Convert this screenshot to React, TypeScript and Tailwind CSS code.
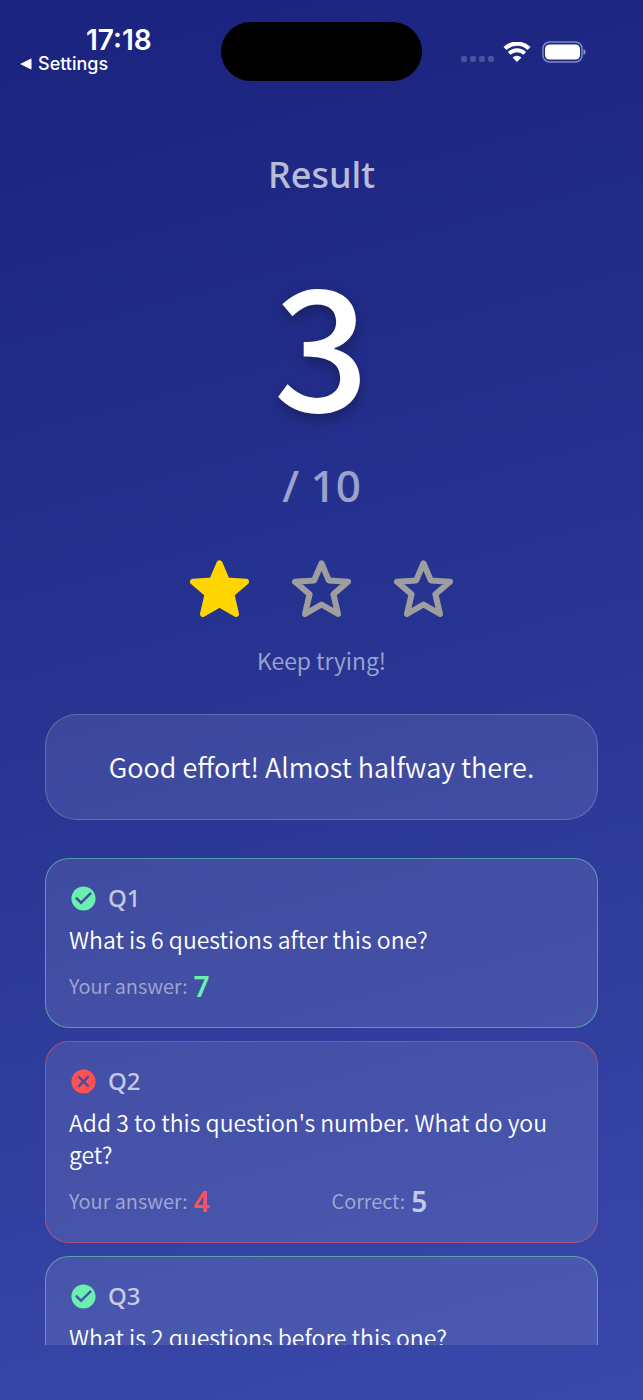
import { MdCancel, MdCheckCircle } from "react-icons/md";
import clsx from "clsx";

type Answer = {
  id: number;
  question: string;
  given: string;
  expected: string;
};

const TOTAL = 10;
const SCORE = 3;

const answers: Answer[] = [
  {
    id: 1,
    question: "What is 6 questions after this one?",
    given: "7",
    expected: "7",
  },
  {
    id: 2,
    question: "Add 3 to this question's number. What do you get?",
    given: "4",
    expected: "5",
  },
  {
    id: 3,
    question: "What is 2 questions before this one?",
    given: "1",
    expected: "1",
  },
];

function StatusBar() {
  return (
    <div className="flex h-[104px] items-start justify-between pt-[22px] font-['Inter',sans-serif] text-white">
      <div className="w-[201px] pl-5">
        <div className="pl-[66px] text-[28px] leading-9 font-semibold">
          17:18
        </div>
        <a
          href="#settings"
          className="flex items-center gap-[6px] text-lg leading-[10px] font-medium"
        >
          <svg viewBox="0 0 12 12" className="size-3" fill="currentColor">
            <path d="M11.5 1.2v9.6c0 .5-.4.7-.8.5L1 6.6c-.6-.3-.6-.9 0-1.2L10.7.7c.4-.2.8 0 .8.5z" />
          </svg>
          Settings
        </a>
      </div>
      <div className="h-[59px] w-[201px] rounded-full bg-black" />
      <div className="flex h-[59px] w-[201px] items-center pl-[19px]">
        <div className="mt-[15px] flex gap-[3px]">
          {[0, 1, 2, 3].map((dot) => (
            <span key={dot} className="size-[6px] rounded-[2px] bg-white/20" />
          ))}
        </div>
        <svg viewBox="0 0 28 20" className="ml-[9px] h-5 w-7" fill="none">
          <path
            d="M2 6.6a17 17 0 0 1 24 0"
            stroke="white"
            strokeWidth="4.2"
          />
          <path
            d="M6.2 11.4a11.2 11.2 0 0 1 15.6 0"
            stroke="white"
            strokeWidth="3.8"
          />
          <path d="M14 20l-4.4-4.5a6.3 6.3 0 0 1 8.8 0z" fill="white" />
        </svg>
        <svg viewBox="0 0 44 22" className="ml-[11px] h-[22px] w-11">
          <rect
            x="1"
            y="1"
            width="39"
            height="20"
            rx="6.5"
            fill="none"
            stroke="white"
            strokeOpacity=".45"
            strokeWidth="1.5"
          />
          <rect x="3" y="3.5" width="35" height="15" rx="4.5" fill="white" />
          <path
            d="M41.5 8c1.3.4 2 1.7 2 3s-.7 2.6-2 3z"
            fill="white"
            fillOpacity=".5"
          />
        </svg>
      </div>
    </div>
  );
}

function Star({ filled }: { filled: boolean }) {
  return (
    <svg
      viewBox="0 0 60 60"
      className={clsx(
        "size-[60px]",
        filled ? "text-[#ffd600]" : "text-[#9e9e9e]"
      )}
      fill={filled ? "currentColor" : "none"}
      stroke="currentColor"
      strokeWidth="6"
      strokeLinejoin="round"
    >
      <path d="M29.5 4.3L36.8 21.4L56 22.8L41.4 35.3L46 55L29.5 45.5L13 55L17.6 35.3L3 22.8L22.2 21.4Z" />
    </svg>
  );
}

function AnswerCard({ answer }: { answer: Answer }) {
  const correct = answer.given === answer.expected;

  return (
    <li
      className={clsx(
        "shrink-0 rounded-3xl border bg-white/10 px-[23px] pt-6 pb-[23px]",
        correct ? "border-[#69f0ae]/50" : "border-[#ff5252]/50"
      )}
    >
      <div className="flex h-[30px] items-center gap-[10px]">
        {correct ? (
          <MdCheckCircle className="size-[29px] text-[#69f0ae]" />
        ) : (
          <MdCancel className="size-[29px] text-[#ff5252]" />
        )}
        <h2 className="font-['Noto_Sans',sans-serif] text-2xl font-medium text-white/70">
          Q{answer.id}
        </h2>
      </div>
      <p className="mt-[10px] text-[23px] leading-8 text-white">
        {answer.question}
      </p>
      <div className="mt-[13px] grid h-9 grid-cols-2 gap-5 text-xl text-white/50">
        <p className="flex items-center gap-[6px]">
          Your answer:
          <span
            className={clsx(
              "font-['Noto_Sans',sans-serif] text-[28px] leading-9 font-semibold",
              correct ? "text-[#69f0ae]" : "text-[#ff5252]"
            )}
          >
            {answer.given}
          </span>
        </p>
        {!correct && (
          <p className="flex items-center gap-[6px]">
            Correct:
            <span className="font-['Noto_Sans',sans-serif] text-[28px] leading-9 font-semibold text-white/70">
              {answer.expected}
            </span>
          </p>
        )}
      </div>
    </li>
  );
}

export default function App() {
  const stars = Math.ceil(SCORE / 4);

  return (
    <div className="flex h-screen flex-col overflow-hidden bg-[linear-gradient(165deg,#1a237e,#283593_50%,#3949ab)] pb-[55px] font-['Noto_Sans_CJK_JP',sans-serif] font-[350]">
      <StatusBar />
      <main className="flex min-h-0 flex-1 flex-col px-[45px]">
        <header className="flex flex-col items-center pt-[47px] font-['Noto_Sans',sans-serif] font-medium">
          <h1 className="text-4xl leading-[48px] text-white/70">Result</h1>
          <p className="mt-[18px] font-['Noto_Sans_CJK_JP',sans-serif] text-[168px] leading-[244px] font-medium text-white [text-shadow:0_5px_14px_rgb(0_0_0/0.3)]">
            {SCORE}
          </p>
          <p className="text-[44px] leading-[48px] text-white/55">
            / {TOTAL}
          </p>
        </header>
        <div
          className="mt-[50px] flex justify-center gap-[42px]"
          role="img"
          aria-label={`${stars} of 3 stars`}
        >
          {[1, 2, 3].map((n) => (
            <Star key={n} filled={n <= stars} />
          ))}
        </div>
        <p className="mt-[25px] text-center text-[23px] leading-8 text-white/55">
          Keep trying!
        </p>
        <p className="mt-[38px] rounded-[32px] border border-white/20 bg-white/10 px-6 py-8 text-center text-[27px] leading-10 text-white">
          Good effort! Almost halfway there.
        </p>
        <ul className="mt-[38px] flex min-h-0 flex-1 flex-col gap-[13px] overflow-hidden">
          {answers.map((answer) => (
            <AnswerCard key={answer.id} answer={answer} />
          ))}
        </ul>
      </main>
    </div>
  );
}
